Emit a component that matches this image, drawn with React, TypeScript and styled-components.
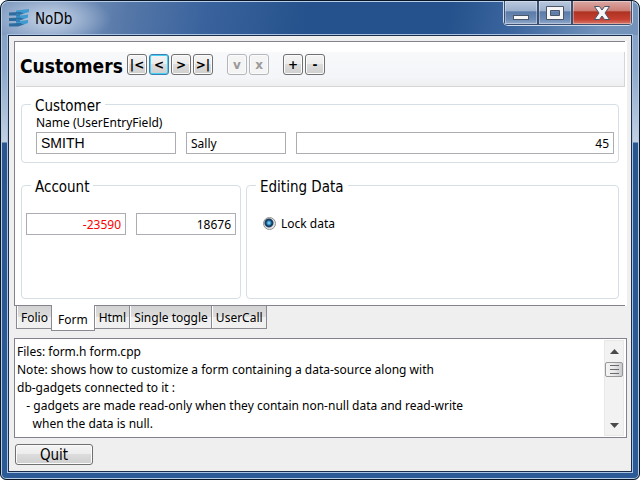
import React from "react";
import styled, { createGlobalStyle, css } from "styled-components";

const Global = createGlobalStyle`
  *, *::before, *::after { box-sizing: border-box; }
  html, body, #root { height: 100%; }
  body { margin: 0; background: #fff; overflow: hidden; }
  body, button, input, textarea { font-family: "Noto Sans", sans-serif; font-size: 12px; color: #000; }
`;

const captionFont = `"DejaVu Sans Condensed", "DejaVu Sans", sans-serif`;

const Window = styled.div`
  height: 100vh;
  min-height: 400px;
  display: flex;
  flex-direction: column;
  padding: 0 6px 6px;
  border: 1px solid #0a1526;
  border-radius: 8px 8px 6px 6px;
  box-shadow: inset 0 0 0 1px #b5cde6;
  background:
    radial-gradient(ellipse 60px 26px at 50px 18px, rgba(225,235,248,.75), rgba(225,235,248,0)) no-repeat,
    linear-gradient(100deg, #7f9abf 0, #7c97bd 9%, #5577a8 20%, #3a639d 32%, #25528c 48%, #25528c 70%, #3b659e 80%, #7393bb 94%, #7393bb 100%) 0 0 / 100% 34px no-repeat,
    linear-gradient(#7f9bc0 0, #8ea9cb 70px, #c3d0e2 141px, #2a568f 142px, #2b5a96 100%);
`;

const TitleBar = styled.header`
  height: 33px;
  flex: none;
  display: flex;
  align-items: flex-start;
  padding-left: 2px;
`;

const Logo = styled.svg`
  width: 20px;
  height: 18px;
  margin-top: 8px;
`;

const Title = styled.h1`
  flex: 1;
  margin: 7px 0 0 6px;
  font: 15px/22px ${captionFont};
`;

const Controls = styled.div`
  display: flex;
  height: 25px;
  border: 1px solid #d0dcec;
  border-top: 0;
  border-radius: 0 0 5px 5px;
  overflow: hidden;
`;

const ControlButton = styled.button<{ $close?: boolean }>`
  width: ${(p) => (p.$close ? 60 : 34)}px;
  padding: 0;
  border: 1px solid #3c4f70;
  border-top: 0;
  box-shadow: inset 0 0 0 1px rgba(255, 255, 255, 0.35);
  display: grid;
  place-items: center;
  background: ${(p) =>
    p.$close
      ? "linear-gradient(#dba9a5 0, #cb7b72 45%, #ad3222 46%, #c64030 80%, #d57a6b 100%)"
      : "linear-gradient(#b9c8dd 0, #9aaecb 45%, #5a7aa8 46%, #6d8bb5 80%, #94abca 100%)"};
`;

const Client = styled.main`
  flex: 1;
  min-height: 0;
  display: flex;
  flex-direction: column;
  border: 1px solid #1c2d4c;
  outline: 1px solid #a9c4e2;
  background: #efefef;
  margin: 1px;
  padding: 5px 4px 6px 5px;
`;

const Panel = styled.section`
  flex: 1;
  display: flex;
  flex-direction: column;
  border: 1px solid #83838f;
  border-right: 0;
  background: #fff;
  margin-right: 2px;
  box-shadow: 2px 0 0 #fff;
`;

const Toolbar = styled.div`
  display: flex;
  align-items: flex-start;
  height: 35px;
  margin: 10px 0 0 1px;
  padding: 2px 4px;
  background: linear-gradient(#f8f9fb, #f3f5f8 75%, #efeff0);
  border: 1px solid #d5d5d5;
  border-width: 0 1px 1px 0;
`;

const Heading = styled.h2`
  width: 107px;
  margin: 0;
  font-family: ${captionFont};
  font-size: 19px;
  line-height: 25px;
`;

const ButtonGroup = styled.div`
  display: flex;
  gap: 2px;
  margin-right: 14px;
`;

const face = css`
  border: 1px solid #707070;
  border-radius: 3px;
  background: linear-gradient(#f4f4f4 0, #ececec 48%, #dcdcdc 50%, #cfcfcf 100%);
  box-shadow: inset 0 0 0 1px #fbfbfb;
`;

const ToolButton = styled.button<{ $active?: boolean }>`
  ${face}
  width: 20px;
  height: 21px;
  padding: 0;
  display: flex;
  justify-content: center;
  font-family: "DejaVu Sans", sans-serif;
  font-weight: bold;
  line-height: 20px;
  white-space: nowrap;
  ${(p) => p.$active && css`border-color: #3c7fb1; box-shadow: inset 0 0 0 1px #46d1f5;`}
  &:disabled { color: #9a9a9a; border-color: #b3b6ba; background: #f4f4f4; }
`;

const FormBody = styled.form`
  flex: 1;
  display: grid;
  grid-template-columns: 220fr 373fr;
  grid-template-rows: auto 1fr;
  gap: 12px 5px;
  padding: 7px 6px 6px;
`;

const Group = styled.fieldset<{ $wide?: boolean }>`
  grid-column: ${(p) => (p.$wide ? "1 / -1" : "auto")};
  min-width: 0;
  margin: 0;
  padding: ${(p) => (p.$wide ? "0 4px 8px 14px" : "17px 4px 0")};
  border: 1px solid #d5dfe5;
  border-radius: 4px;
`;

const Legend = styled.legend<{ $wide?: boolean }>`
  margin-left: ${(p) => (p.$wide ? -5 : 5)}px;
  padding: 3px 4px 0;
  font-family: ${captionFont};
  font-size: 15px;
  line-height: 18px;
`;

const FieldLabel = styled.label`
  display: block;
  line-height: 16px;
  margin-bottom: 1px;
`;

const Fields = styled.div<{ $columns: string }>`
  display: grid;
  grid-template-columns: ${(p) => p.$columns};
  gap: 10px;
`;

const Field = styled.input<{ $right?: boolean; $negative?: boolean; $large?: boolean }>`
  width: 100%;
  min-width: 0;
  height: 22px;
  padding: 0 4px;
  border: 1px solid #abadb3;
  border-radius: 0;
  outline: 0;
  background: #fff;
  text-align: ${(p) => (p.$right ? "right" : "left")};
  color: ${(p) => (p.$negative ? "#f00" : "#000")};
  ${(p) => p.$large && css`font: 14px "Liberation Sans", sans-serif;`}
`;

const RadioLabel = styled.label`
  display: flex;
  align-items: center;
  gap: 5px;
  padding-left: 12px;
  height: 20px;
`;

const Radio = styled.input`
  appearance: none;
  width: 13px;
  height: 13px;
  margin: 0;
  border: 1px solid #8e8f8f;
  border-radius: 50%;
  background: #f4f4f4;
  &:checked {
    background: radial-gradient(circle at 45% 45%, #a5e2fa 0, #2a8cc4 2px, #123c61 3px, #24425e 4px, #e4e6e8 5px);
  }
`;

const Tabs = styled.div`
  flex: none;
  display: flex;
  align-items: flex-start;
  height: 32px;
  padding-left: 2px;
`;

const Tab = styled.button<{ $active?: boolean }>`
  height: 23px;
  padding: 2px 3px 0 4px;
  border: 1px solid #8a8a93;
  border-top: 0;
  margin-right: -1px;
  box-shadow: inset 1px 0 0 #fff;
  background: linear-gradient(#d2d2d2 0, #dddddd 50%, #efefef 51%, #f0f0f0 100%);
  line-height: 20px;
  ${(p) => p.$active && css`
    z-index: 1;
    height: 26px;
    margin-top: -1px;
    padding: 5px 6px 0;
    background: #fff;
  `}
`;

const Notes = styled.div`
  flex: none;
  display: flex;
  height: 100px;
  border: 1px solid #83838f;
  background: #fff;
  padding: 1px;
`;

const NotesText = styled.textarea`
  flex: 1;
  min-width: 0;
  resize: none;
  border: 0;
  outline: 0;
  overflow: hidden;
  padding: 3px 1px;
  background: #fff;
  line-height: 18px;
  white-space: pre;
`;

const Scrollbar = styled.div`
  width: 20px;
  margin-right: 1px;
  display: flex;
  flex-direction: column;
  align-items: center;
  background: #f2f2f2;
  border: 1px solid #e8e8e8;
`;

const ScrollButton = styled.button`
  width: 18px;
  height: 20px;
  padding: 0;
  border: 0;
  background: none;
  display: grid;
  place-items: center;
`;

const Thumb = styled.div`
  width: 18px;
  height: 15px;
  margin: 1px 0 auto;
  border: 1px solid #979797;
  border-radius: 2px;
  background: linear-gradient(90deg, #f5f5f5, #e9e9eb 50%, #c9cace);
  display: grid;
  place-items: center;
`;

const QuitButton = styled.button`
  ${face}
  flex: none;
  width: 78px;
  height: 21px;
  margin: 6px 0 0 1px;
  padding: 1px 0 0;
  font-family: ${captionFont};
  font-size: 15px;
  line-height: 18px;
`;

const notes = `Files: form.h form.cpp
Note: shows how to customize a form containing a data-source along with
db-gadgets connected to it :
   - gadgets are made read-only when they contain non-null data and read-write
     when the data is null.`;

type Tool = { text: string; name: string; active?: boolean; disabled?: boolean };

const toolGroups: Tool[][] = [
  [
    { text: "|<", name: "First" },
    { text: "<", name: "Previous", active: true },
    { text: ">", name: "Next" },
    { text: ">|", name: "Last" },
  ],
  [
    { text: "v", name: "Validate", disabled: true },
    { text: "x", name: "Cancel", disabled: true },
  ],
  [
    { text: "+", name: "Add" },
    { text: "-", name: "Remove" },
  ],
];

export default function App() {
  const [tab, setTab] = React.useState("Form");
  return (
    <>
      <Global />
      <Window>
        <TitleBar>
          <Logo viewBox="0 0 20 18" aria-hidden="true">
            <path d="M7 1.500 20 0V3L15 4.500H7zM7 7 19 5.500V8.500L15 10H7zM7 12.500 19 11V14L15 15.500H7z" fill="#3f9ad0" />
            <path d="M0 3.500 11 3 15 4.500 9 6.500H0zM0 9 11 8.500 15 10 9 12H0zM0 14.500 11 14 15 15.500 9 17.500H0z" fill="#2c6c9f" />
            <path d="M7 4.500h4v3H7zM7 10h4v3H7z" fill="#347fb4" />
          </Logo>
          <Title>NoDb</Title>
          <Controls>
            <ControlButton aria-label="Minimize">
              <svg width="18" height="22"><rect x="1.5" y="13.5" width="15" height="4" fill="#f6f6f6" stroke="#4a5568" /></svg>
            </ControlButton>
            <ControlButton aria-label="Maximize">
              <svg width="18" height="16"><path d="M.5 1.5h17v13H.5zM4.5 5.5v5h9v-5z" fill="#f6f6f6" fillRule="evenodd" stroke="#4a5568" /></svg>
            </ControlButton>
            <ControlButton aria-label="Close" $close>
              <svg width="16" height="14"><path d="M.5.5h5L8 4 10.5.5h5L11 7l4.500 6.500h-5L8 10l-2.500 3.500h-5L5 7z" fill="#f6f6f6" stroke="#4a5568" /></svg>
            </ControlButton>
          </Controls>
        </TitleBar>
        <Client>
          <Panel>
            <Toolbar>
              <Heading>Customers</Heading>
              {toolGroups.map((group, i) => (
                <ButtonGroup key={i}>
                  {group.map((b) => (
                    <ToolButton key={b.name} aria-label={b.name} $active={b.active} disabled={b.disabled}>
                      {b.text}
                    </ToolButton>
                  ))}
                </ButtonGroup>
              ))}
            </Toolbar>
            <FormBody onSubmit={(e) => e.preventDefault()}>
              <Group $wide>
                <Legend $wide>Customer</Legend>
                <FieldLabel htmlFor="name">Name (UserEntryField)</FieldLabel>
                <Fields $columns="140fr 100fr 318fr">
                  <Field id="name" defaultValue="SMITH" $large />
                  <Field aria-label="First name" defaultValue="Sally" />
                  <Field aria-label="Age" defaultValue="45" $right />
                </Fields>
              </Group>
              <Group>
                <Legend>Account</Legend>
                <Fields $columns="1fr 1fr">
                  <Field aria-label="Balance" defaultValue="-23590" $right $negative />
                  <Field aria-label="Credit" defaultValue="18676" $right />
                </Fields>
              </Group>
              <Group>
                <Legend>Editing Data</Legend>
                <RadioLabel>
                  <Radio type="radio" name="lock" defaultChecked />
                  Lock data
                </RadioLabel>
              </Group>
            </FormBody>
          </Panel>
          <Tabs role="tablist">
            {["Folio", "Form", "Html", "Single toggle", "UserCall"].map((t) => (
              <Tab key={t} role="tab" aria-selected={t === tab} $active={t === tab} onClick={() => setTab(t)}>
                {t}
              </Tab>
            ))}
          </Tabs>
          <Notes>
            <NotesText aria-label="Notes" readOnly value={notes} />
            <Scrollbar>
              <ScrollButton aria-label="Scroll up">
                <svg width="9" height="5"><path d="M0 5 4.500 0 9 5z" fill="#4a4a4a" /></svg>
              </ScrollButton>
              <Thumb>
                <svg width="9" height="11"><path d="M0 1.500h9M0 5.500h9M0 9.500h9" stroke="#6b6b6b" /></svg>
              </Thumb>
              <ScrollButton aria-label="Scroll down">
                <svg width="9" height="5"><path d="M0 0 4.500 5 9 0z" fill="#4a4a4a" /></svg>
              </ScrollButton>
            </Scrollbar>
          </Notes>
          <QuitButton>Quit</QuitButton>
        </Client>
      </Window>
    </>
  );
}
